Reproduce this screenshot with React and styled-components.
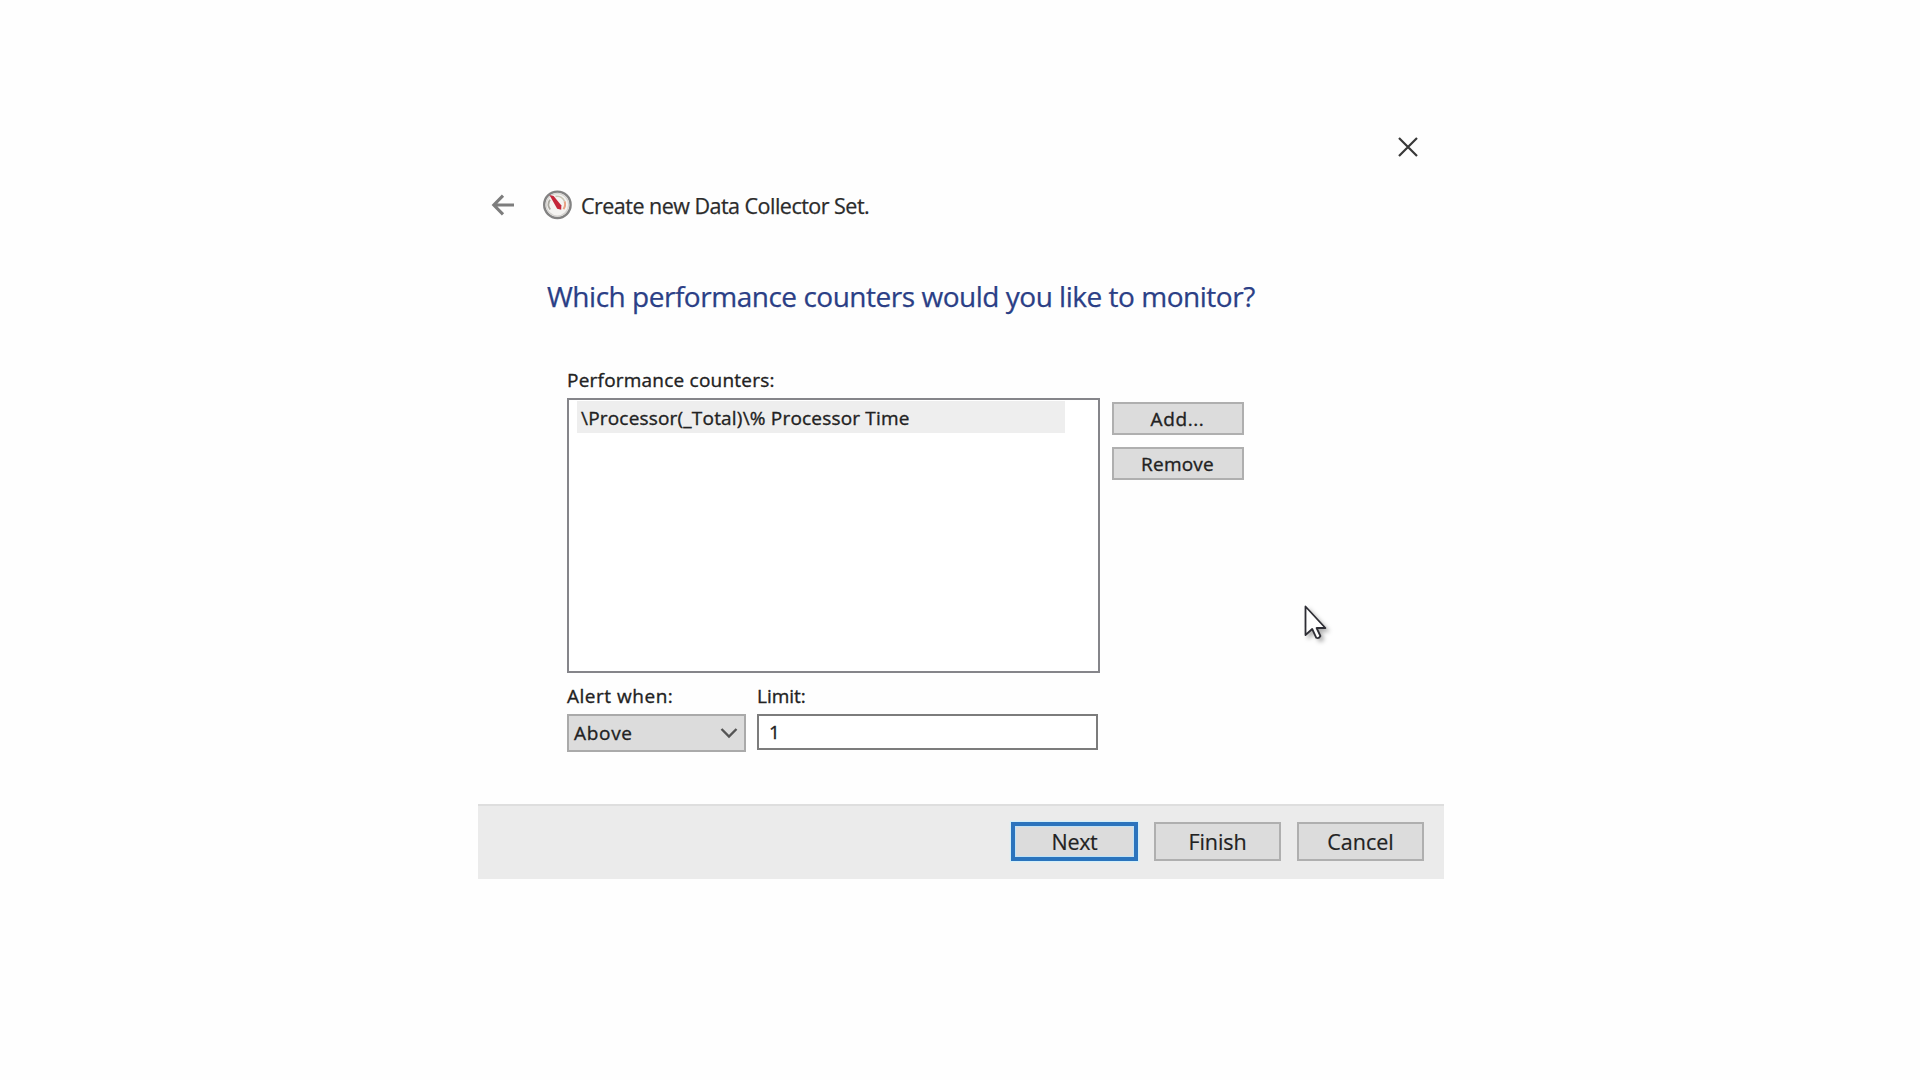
import React from "react";
import styled, { createGlobalStyle } from "styled-components";

const GlobalStyle = createGlobalStyle`
  * { box-sizing: border-box; }
  body {
    margin: 0;
    background: #fefefe;
    font-family: "Open Sans", "Noto Sans", sans-serif;
    color: #222222;
    overflow: hidden;
  }
`;

const Page = styled.div`
  width: 1920px;
  height: 1080px;
  padding: 124px 0 0 478px;
`;

const Dialog = styled.main`
  width: 966px;
  height: 755px;
  display: flex;
  flex-direction: column;
`;

const TitleBar = styled.div`
  height: 46px;
  display: flex;
  align-items: center;
  justify-content: flex-end;
  padding-right: 25px;
`;

const Header = styled.header`
  height: 70px;
  display: flex;
  align-items: center;
  padding-left: 13px;
`;

const GaugeIcon = styled.svg`
  margin-left: 27px;
`;

const HeaderTitle = styled.span`
  margin-left: 9px;
  padding-top: 2px;
  font-size: 21.5px;
  line-height: 30px;
  letter-spacing: -0.52px;
  color: #2b2b2b;
  -webkit-text-stroke: 0.25px;
`;

const Question = styled.h1`
  margin: 36px 0 0 69px;
  font-size: 28px;
  font-weight: 400;
  line-height: 40px;
  letter-spacing: -0.48px;
  color: #2b3f86;
  -webkit-text-stroke: 0.25px;
`;

const Body = styled.section`
  flex: 1;
  padding: 54px 0 0 89px;
`;

const Label = styled.label`
  display: block;
  height: 20px;
  font-size: 19px;
  line-height: 20px;
  letter-spacing: ${(p) => p.$spacing || 0}px;
  -webkit-text-stroke: 0.35px;
`;

const CounterArea = styled.div`
  display: flex;
  align-items: flex-start;
  gap: 12px;
  margin-top: 8px;
`;

const CounterList = styled.div`
  width: 533px;
  height: 275px;
  border: 2px solid #85858a;
  background: #fff;
  padding: 1px 33px 0 8px;
`;

const CounterRow = styled.div`
  height: 32px;
  padding: 2px 0 0 4px;
  background: #eeeeee;
  font-size: 19px;
  line-height: 31px;
  letter-spacing: 0.19px;
  -webkit-text-stroke: 0.35px;
`;

const SideButtons = styled.div`
  display: flex;
  flex-direction: column;
  gap: 12px;
  padding-top: 4px;
`;

const Button = styled.button`
  width: ${(p) => (p.$large ? 127 : 132)}px;
  height: ${(p) => (p.$large ? 39 : 33)}px;
  padding: ${(p) => (p.$large ? "0" : "0 1px 0 0")};
  border: ${(p) => (p.$primary ? "4px solid #2b74bd" : "2px solid #afafaf")};
  box-shadow: ${(p) => (p.$primary ? "inset 0 0 0 1px #bfe3f7, 0 0 1px 1px #d3effa" : "none")};
  background: #dcdcdc;
  color: #222222;
  font-family: inherit;
  font-size: ${(p) => (p.$large ? 21.5 : 19)}px;
  line-height: 28px;
  letter-spacing: ${(p) => p.$spacing || 0}px;
  -webkit-text-stroke: ${(p) => (p.$large ? 0.2 : 0.35)}px;
  display: flex;
  align-items: center;
  justify-content: center;
`;

const AlertFields = styled.div`
  display: flex;
  gap: 11px;
  margin-top: 13px;
`;

const Field = styled.div`
  width: ${(p) => p.$width}px;
  display: flex;
  flex-direction: column;
  gap: 8px;
`;

const Select = styled.div`
  height: 38px;
  display: flex;
  align-items: center;
  justify-content: space-between;
  padding: 0 6px 0 5px;
  border: 2px solid #aaaaaa;
  background: #dcdcdc;
  font-size: 19px;
  letter-spacing: 0.7px;
  -webkit-text-stroke: 0.35px;
`;

const LimitInput = styled.input`
  height: 36px;
  padding: 0 0 1px 10px;
  border: 2px solid #7c7c7c;
  border-radius: 0;
  background: #fff;
  color: #222222;
  font-family: inherit;
  font-size: 19px;
  -webkit-text-stroke: 0.35px;
  outline: none;
`;

const Footer = styled.footer`
  height: 75px;
  display: flex;
  align-items: flex-start;
  justify-content: flex-end;
  gap: 16px;
  padding: 16px 20px 0 0;
  border-top: 2px solid #dedede;
  background: #ebebeb;
`;

const Pointer = styled.svg`
  position: absolute;
  left: 1300px;
  top: 601px;
  filter: drop-shadow(3px 3px 2px rgba(0, 0, 0, 0.3));
`;

export default function App() {
  return (
    <>
      <GlobalStyle />
      <Page>
        <Dialog>
          <TitleBar>
            <svg width="22" height="22" viewBox="0 0 22 22" fill="none" stroke="#383838" strokeWidth="2.2">
              <path d="M2 2 L20 20 M20 2 L2 20" />
            </svg>
          </TitleBar>

          <Header>
            <svg width="24" height="24" viewBox="0 0 24 24" fill="none" stroke="#7d7d7d" strokeWidth="3.1">
              <path d="M23 12 H3 M12 2.7 L2.8 12 L12 21.3" />
            </svg>
            <GaugeIcon width="30" height="30" viewBox="0 0 30 30" fill="none">
              <circle cx="15.4" cy="14.8" r="13.2" fill="#f4f3f1" stroke="#828282" strokeWidth="2.4" />
              <circle cx="15.4" cy="14.8" r="11.2" stroke="#d5d3d0" strokeWidth="1.2" />
              <path d="M8.2 19.5 A8.4 8.4 0 0 1 8 9.8" stroke="#aaa89f" strokeWidth="1.8" />
              <path d="M13.5 6.4 A8.4 8.4 0 0 1 22.6 11.4" stroke="#c9c5b5" strokeWidth="1.6" />
              <path d="M22.6 11.4 A8.4 8.4 0 0 1 21.4 19.2" stroke="#e8a184" strokeWidth="2" />
              <path d="M7.4 5 L11.6 6 L19.4 15.5 L19.2 19.8 L15.2 18.8 Z" fill="#c4263a" />
            </GaugeIcon>
            <HeaderTitle>Create new Data Collector Set.</HeaderTitle>
          </Header>

          <Question>Which performance counters would you like to monitor?</Question>

          <Body>
            <Label $spacing={0.22}>Performance counters:</Label>
            <CounterArea>
              <CounterList>
                <CounterRow>{"\\Processor(_Total)\\% Processor Time"}</CounterRow>
              </CounterList>
              <SideButtons>
                <Button $spacing={0.6}>Add...</Button>
                <Button $spacing={0.2}>Remove</Button>
              </SideButtons>
            </CounterArea>

            <AlertFields>
              <Field $width={179}>
                <Label $spacing={0.52}>Alert when:</Label>
                <Select>
                  Above
                  <svg width="18" height="12" viewBox="0 0 18 12" fill="none" stroke="#555555" strokeWidth="2.4">
                    <path d="M1.5 2 L9 9.5 L16.5 2" />
                  </svg>
                </Select>
              </Field>
              <Field $width={341}>
                <Label>Limit:</Label>
                <LimitInput defaultValue="1" />
              </Field>
            </AlertFields>
          </Body>

          <Footer>
            <Button $large $primary $spacing={-0.3}>Next</Button>
            <Button $large $spacing={-0.1}>Finish</Button>
            <Button $large>Cancel</Button>
          </Footer>
        </Dialog>
      </Page>
      <Pointer width="30" height="42" viewBox="0 0 30 42">
        <path
          d="M5.5 5.5 V34 L12.2 28 L16.3 36.8 Q18.8 38 20.4 35 L16.6 27 H25.4 Z"
          fill="#fff"
          stroke="#2e2e35"
          strokeWidth="1.8"
          strokeLinejoin="round"
        />
      </Pointer>
    </>
  );
}
